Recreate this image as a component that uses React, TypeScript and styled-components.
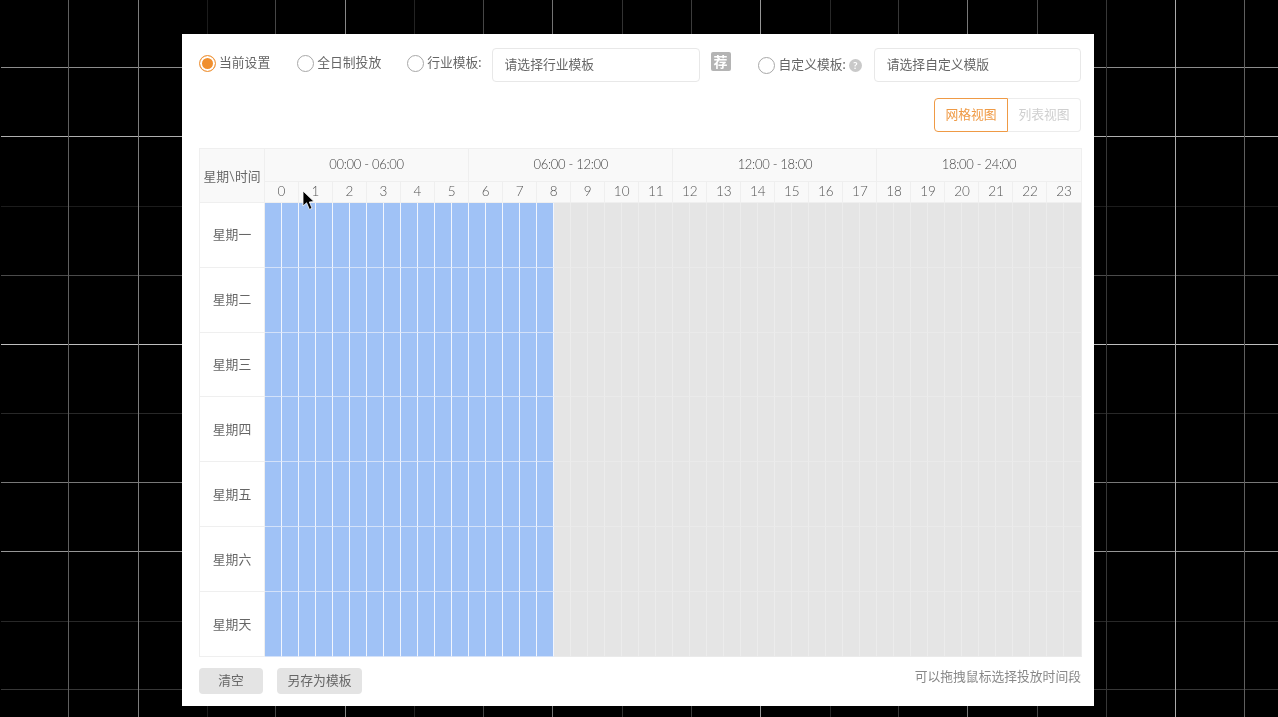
import React from "react";
import styled, { createGlobalStyle, css } from "styled-components";

const DAYS = [
  { name: "星期一", height: 65, pad: 4 },
  { name: "星期二", height: 65, pad: 4 },
  { name: "星期三", height: 64, pad: 3 },
  { name: "星期四", height: 65, pad: 2 },
  { name: "星期五", height: 65, pad: 2 },
  { name: "星期六", height: 65, pad: 2 },
  { name: "星期天", height: 65, pad: 2 },
];
const RANGES = ["00:00 - 06:00", "06:00 - 12:00", "12:00 - 18:00", "18:00 - 24:00"];
const HOURS = Array.from({ length: 24 }, (_, i) => i);
const HALF_HOURS = Array.from({ length: 48 }, (_, i) => i);
const SELECTED_HALF_HOURS = 17;

// the faint grid behind the panel: [position, grey level]
const V_LINES = [
  [68, 95], [138, 125], [207, 28], [275, 70], [345, 135], [414, 35], [483, 70], [552, 115], [622, 50],
  [691, 60], [760, 150], [830, 40], [898, 55], [967, 120], [1037, 70], [1106, 55], [1175, 170], [1244, 95],
];
const H_LINES = [
  [67, 140], [136, 175], [206, 28], [275, 75], [344, 190], [413, 40], [482, 120], [551, 150], [621, 40], [689, 55],
];
const line = (grey: number) => `linear-gradient(rgb(${grey},${grey},${grey}),rgb(${grey},${grey},${grey}))`;
const gridLines = [
  ...V_LINES.map(([x, g]) => `${line(g)} ${x}px 0 / 1px 100% no-repeat`),
  ...H_LINES.map(([y, g]) => `${line(g)} 1px ${y}px / 100% 1px no-repeat`),
].join(",");

const GlobalStyle = createGlobalStyle`
  html, body {
    margin: 0;
    padding: 0;
    background: #000;
  }
  * {
    box-sizing: border-box;
  }
`;

const Stage = styled.div`
  width: 1278px;
  height: 717px;
  padding: 34px 0 0 182px;
  overflow: hidden;
  background: ${gridLines}, #000;
  font-family: Lato, "Noto Sans CJK SC", sans-serif;
  font-size: 12.8px;
  color: #666;
`;

const Panel = styled.div`
  position: relative;
  width: 912px;
  height: 672px;
  padding: 14px 13px 0 17px;
  background: #fff;
  filter: blur(0.35px);
`;

const Toolbar = styled.div`
  display: flex;
  align-items: center;
  height: 34px;
`;

const RadioOption = styled.label<{ $gap?: number; $shift?: number; $labelGap?: number }>`
  display: flex;
  align-items: center;
  gap: ${(p) => p.$labelGap ?? 3}px;
  margin-right: ${(p) => p.$gap ?? 0}px;
  margin-top: ${(p) => p.$shift ?? -4}px;
  white-space: nowrap;
  color: #666;
`;

const RadioLabel = styled.span`
  line-height: 1;
  margin-top: -2px;
`;

const RadioDot = styled.span<{ $on?: boolean }>`
  display: inline-block;
  flex: none;
  width: 17px;
  height: 17px;
  border-radius: 50%;
  border: 1px solid ${(p) => (p.$on ? "#ef9a45" : "#a8a8a8")};
  ${(p) =>
    p.$on &&
    css`
      background: #f08f2e;
      box-shadow: inset 0 0 0 2px #fff;
    `}
`;

const SelectBox = styled.div<{ $width: number }>`
  display: flex;
  align-items: center;
  width: ${(p) => p.$width}px;
  height: 34px;
  padding: 0 0 4px 12px;
  border: 1px solid #e8e8e8;
  border-radius: 4px;
  color: #666;
`;

const Badge = styled.span`
  display: flex;
  align-items: center;
  justify-content: center;
  width: 20px;
  height: 19px;
  margin: -7px 27px 0 11px;
  border-radius: 2px;
  background: #b4b4b4;
  color: #fff;
  font-size: 14px;
  font-weight: 700;
  line-height: 1;
`;

const HelpIcon = styled.span`
  display: flex;
  align-items: center;
  justify-content: center;
  width: 13px;
  height: 13px;
  margin: 0 12px 0 3px;
  border-radius: 50%;
  background: #c9c9c9;
  color: #fff;
  font-size: 10px;
  font-weight: 700;
  line-height: 1;
`;

const ViewSwitch = styled.div`
  display: flex;
  justify-content: flex-end;
  margin-top: 16px;
  height: 34px;
`;

const ViewButton = styled.div<{ $active?: boolean }>`
  display: flex;
  align-items: center;
  justify-content: center;
  height: 34px;
  padding-bottom: 3px;
  ${(p) =>
    p.$active
      ? css`
          width: 74px;
          border: 1px solid #ef9a45;
          border-radius: 4px 0 0 4px;
          color: #ef9a45;
        `
      : css`
          width: 73px;
          border: 1px solid #ececec;
          border-left: 0;
          border-radius: 0 4px 4px 0;
          color: #cfcfcf;
        `}
`;

const Schedule = styled.table`
  width: 882px;
  margin-top: 16px;
  table-layout: fixed;
  border-collapse: separate;
  border-spacing: 0;
  border-left: 1px solid #efefef;
  border-top: 1px solid #efefef;
`;

const HeadCell = styled.th`
  height: 21px;
  padding: 0;
  background: #f9f9f9;
  border-right: 1px solid #efefef;
  border-bottom: 1px solid #efefef;
  font-weight: 400;
  font-size: 12.8px;
  color: #666;
  white-space: nowrap;
  text-align: center;
`;

const RangeCell = styled(HeadCell)`
  height: 33px;
  padding-bottom: 2px;
  font-weight: 300;
  font-size: 13px;
  letter-spacing: -0.3px;
  color: #444;
`;

const HourCell = styled(HeadCell)`
  padding-bottom: 2px;
  font-weight: 300;
  font-size: 13.5px;
  color: #555;
`;

const DayCell = styled.th<{ $height: number; $pad: number }>`
  height: ${(p) => p.$height}px;
  padding: 0 0 ${(p) => p.$pad}px;
  background: #fff;
  border-right: 1px solid #efefef;
  border-bottom: 1px solid #efefef;
  font-weight: 400;
  font-size: 12.8px;
  color: #666;
`;

const SlotCell = styled.td<{ $on?: boolean }>`
  padding: 0;
  background: ${(p) => (p.$on ? "#a0c2f6" : "#e5e5e5")};
  border-right: 1px solid ${(p) => (p.$on ? "#f1f5fd" : "#ececec")};
  border-bottom: 1px solid ${(p) => (p.$on ? "#d3e1f9" : "#eaeaea")};
`;

const Footer = styled.div`
  display: flex;
  align-items: center;
  margin-top: 11px;
  height: 26px;
`;

const GreyButton = styled.div<{ $width: number }>`
  display: flex;
  align-items: center;
  justify-content: center;
  width: ${(p) => p.$width}px;
  height: 26px;
  padding-bottom: 3px;
  margin-right: 14px;
  border-radius: 4px;
  background: #e4e4e4;
  color: #666;
`;

const Hint = styled.span`
  margin-left: auto;
  margin-top: -10px;
  color: #888;
  line-height: 1;
`;

const Pointer = styled.svg`
  position: absolute;
  left: 120px;
  top: 156px;
  width: 13px;
  height: 21px;
`;

const App = () => (
  <Stage>
    <GlobalStyle />
    <Panel>
      <Toolbar>
        <RadioOption $gap={27}>
          <RadioDot $on />
          <RadioLabel>当前设置</RadioLabel>
        </RadioOption>
        <RadioOption $gap={26}>
          <RadioDot />
          <RadioLabel>全日制投放</RadioLabel>
        </RadioOption>
        <RadioOption $gap={10}>
          <RadioDot />
          <RadioLabel>行业模板:</RadioLabel>
        </RadioOption>
        <SelectBox $width={208}>请选择行业模板</SelectBox>
        <Badge>荐</Badge>
        <RadioOption $shift={0} $labelGap={4}>
          <RadioDot />
          <RadioLabel>自定义模板:</RadioLabel>
        </RadioOption>
        <HelpIcon>?</HelpIcon>
        <SelectBox $width={207}>请选择自定义模版</SelectBox>
      </Toolbar>

      <ViewSwitch>
        <ViewButton $active>网格视图</ViewButton>
        <ViewButton>列表视图</ViewButton>
      </ViewSwitch>

      <Schedule>
        <colgroup>
          <col width={65} />
          {HALF_HOURS.map((i) => (
            <col key={i} width={17} />
          ))}
        </colgroup>
        <thead>
          <tr>
            <HeadCell rowSpan={2}>星期\时间</HeadCell>
            {RANGES.map((r) => (
              <RangeCell key={r} colSpan={12}>
                {r}
              </RangeCell>
            ))}
          </tr>
          <tr>
            {HOURS.map((h) => (
              <HourCell key={h} colSpan={2}>
                {h}
              </HourCell>
            ))}
          </tr>
        </thead>
        <tbody>
          {DAYS.map((day) => (
            <tr key={day.name}>
              <DayCell $height={day.height} $pad={day.pad}>
                {day.name}
              </DayCell>
              {HALF_HOURS.map((i) => (
                <SlotCell key={i} $on={i < SELECTED_HALF_HOURS} />
              ))}
            </tr>
          ))}
        </tbody>
      </Schedule>

      <Footer>
        <GreyButton $width={64}>清空</GreyButton>
        <GreyButton $width={85}>另存为模板</GreyButton>
        <Hint>可以拖拽鼠标选择投放时间段</Hint>
      </Footer>

      <Pointer viewBox="0 0 13 21">
        <path d="M1 1 L1 16 L4.6 12.8 L7.4 19.4 L10 18.2 L7.3 12 L12 11.6 Z" fill="#000" stroke="#fff" strokeWidth="0.8" />
      </Pointer>
    </Panel>
  </Stage>
);

export default App;
